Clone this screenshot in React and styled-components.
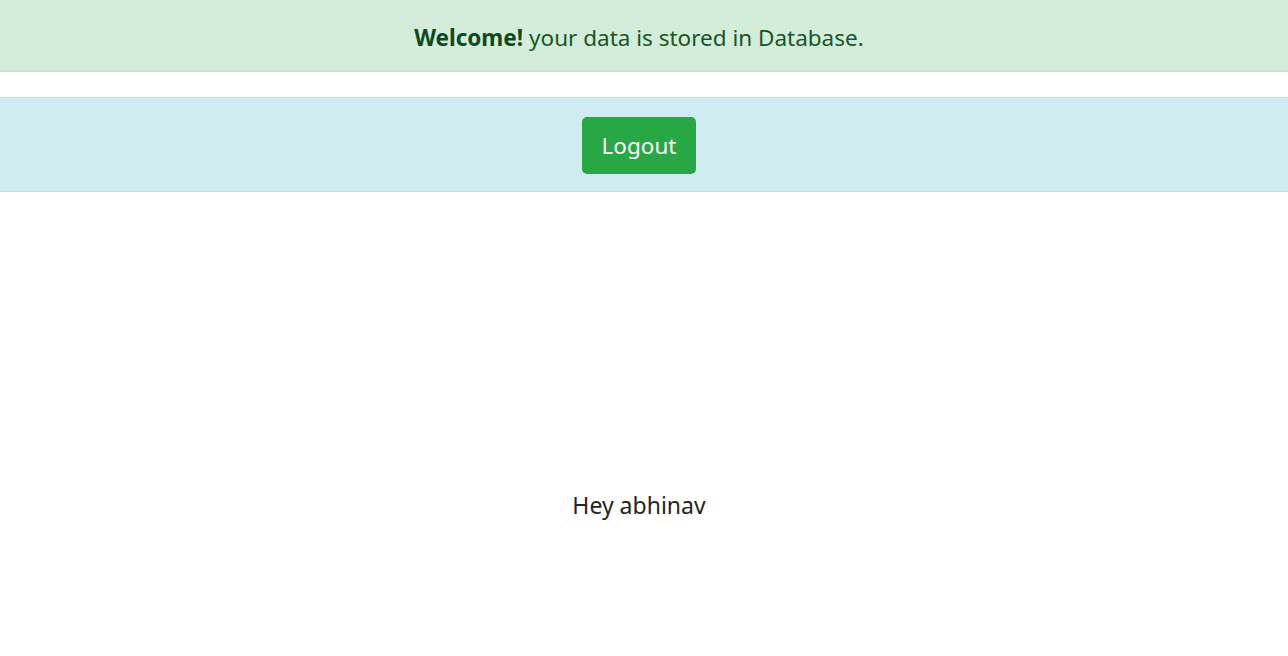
import React from 'react'
import styled, { createGlobalStyle } from 'styled-components'

const GlobalStyle = createGlobalStyle`
  body {
    margin: 0;
    background: #fff;
    font-family: "Noto Sans", "Open Sans", sans-serif;
    color: #212529;
  }
`

export default function App() {
  return (
    <>
      <GlobalStyle />
      <Page>
        <Alert>
          <strong>Welcome!</strong> your data is stored in Database.
        </Alert>
        <Bar>
          <LogoutButton type="button">Logout</LogoutButton>
        </Bar>
        <Greeting>Hey abhinav</Greeting>
      </Page>
    </>
  )
}

const Page = styled.div`
  display: flex;
  flex-direction: column;
  min-height: 100vh;
`

const Alert = styled.div`
  height: 72px;
  display: flex;
  align-items: center;
  justify-content: center;
  gap: 6px;
  padding: 5px 10px 0 0;
  box-sizing: border-box;
  background: #d4edda;
  border-bottom: 2px solid #c3e6cb;
  color: #155724;
  font-size: 22.5px;
  strong {
    font-weight: 700;
    color: #0b4a1c;
  }
`

const Bar = styled.div`
  margin-top: 25px;
  display: flex;
  justify-content: center;
  padding: 19px 10px 17px 0;
  background: #d1ecf1;
  border-top: 1px solid #bee5eb;
  border-bottom: 1px solid #bee5eb;
`

const LogoutButton = styled.button`
  height: 57px;
  padding: 0 20px;
  border: none;
  border-radius: 5px;
  background: #28a745;
  color: #fff;
  font-family: inherit;
  font-size: 22.5px;
  cursor: pointer;
`

const Greeting = styled.p`
  margin: 298px 0 0;
  padding-right: 10px;
  text-align: center;
  font-size: 23px;
  line-height: 30px;
  color: #212529;
`
